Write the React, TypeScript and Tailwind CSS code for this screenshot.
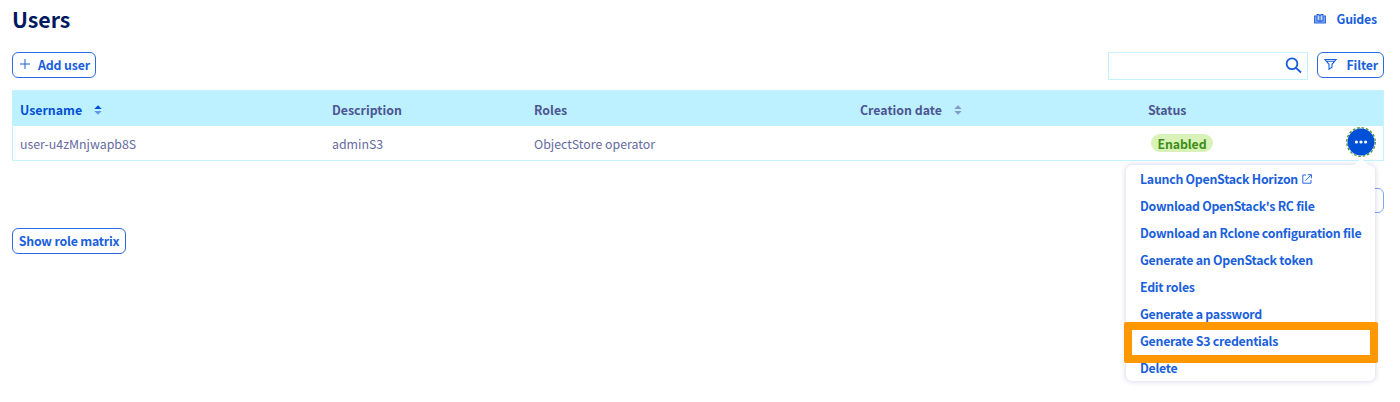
import React from "react";

const columns = [
  { label: "Username", width: "w-[312px]", sort: "active" },
  { label: "Description", width: "w-[202px]", sort: "" },
  { label: "Roles", width: "w-[326px]", sort: "" },
  { label: "Creation date", width: "w-[288px]", sort: "idle" },
  { label: "Status", width: "w-[120px]", sort: "" },
];

const actions = [
  "Launch OpenStack Horizon",
  "Download OpenStack's RC file",
  "Download an Rclone configuration file",
  "Generate an OpenStack token",
  "Edit roles",
  "Generate a password",
  "Generate S3 credentials",
  "Delete",
];

function SortIcon({ active }: { active: boolean }) {
  return (
    <svg width="8" height="10" viewBox="0 0 8 10" className="ml-3">
      <path d="M.3 4 4 .2 7.7 4Z" fill={active ? "#0050d7" : "#7f9bc6"} />
      <path d="M.3 6 4 9.8 7.7 6Z" fill={active ? "#5d99e4" : "#7f9bc6"} />
    </svg>
  );
}

function BookIcon() {
  return (
    <svg width="12" height="10" viewBox="0 0 12 10" fill="none" stroke="#2a66de" strokeWidth="1.1">
      <path d="M2.5 2H.6V9H11.4V2H9.5" fill="#8fb2f0" />
      <path d="M6 1.6Q5.4.6 4.2.6H3V6.9H4.2Q5.4 6.9 6 7.8Q6.6 6.9 7.8 6.9H9V.6H7.8Q6.6.6 6 1.6V7.6" fill="#c3d6f8" />
    </svg>
  );
}

export default function App() {
  return (
    <div className="h-[402px] w-[1400px] overflow-hidden bg-white pl-3 pr-4 font-['Noto_Sans_CJK_SC','Source_Sans_Pro',sans-serif] text-[12.35px] leading-[18px] text-[#1a5fdc]">
      <header className="flex h-[52px] items-start justify-between">
        <h1 className="mt-1 text-[21.3px] font-bold leading-[30px] text-[#00185e]">Users</h1>
        <a className="mr-[7px] mt-[10px] flex items-center gap-[11px] font-bold tracking-[-0.2px]">
          <BookIcon />
          Guides
        </a>
      </header>

      <div className="flex h-[38px] items-start justify-between">
        <button className="flex h-[26px] w-[84px] items-center justify-between rounded-md border border-[#2b6be0] pl-[6px] pr-[5px] font-bold tracking-[-0.15px]">
          <svg width="12" height="12" viewBox="0 0 12 12" className="mb-[3px]" fill="none" stroke="#1a5fdc">
            <path d="M6 1v10M1 6h10" />
          </svg>
          Add user
        </button>
        <div className="flex items-start gap-[9px]">
          <div className="flex h-7 w-[200px] items-center justify-end border border-[#c4f2ff] pr-[5px]">
            <svg width="17" height="17" viewBox="0 0 17 17" className="mb-[2px]" fill="none" stroke="#1459db" strokeWidth="1.8">
              <circle cx="7" cy="6.8" r="5.4" />
              <path d="m11 10.8 5 4.7" />
            </svg>
          </div>
          <button className="flex h-[26px] w-[67px] items-center justify-between rounded-md border border-[#2b6be0] pl-[6px] pr-[5px] font-bold tracking-[-0.15px]">
            <svg width="13" height="13" viewBox="0 0 13 13" className="mb-[2px]" fill="none" stroke="#1a5fdc" strokeWidth="1.1">
              <path d="M1 1.5H12L8 6.3V9.3L5 11.2V6.3Z M2.5 3.3H10.5" />
            </svg>
            Filter
          </button>
        </div>
      </div>

      <div className="h-[71px] border border-[#c4f2ff]">
        <div className="flex h-[35px] items-center bg-[#bef1ff] pl-[7px] pt-[2px] font-bold text-[#4d5592]">
          {columns.map((c) => (
            <div key={c.label} className={"flex items-center " + c.width}>
              <span className={c.sort === "active" ? "text-[#0050d7]" : ""}>{c.label}</span>
              {c.sort && <SortIcon active={c.sort === "active"} />}
            </div>
          ))}
        </div>
        <div className="flex h-[34px] items-center pl-[7px] text-[#666b9f]">
          <span className="w-[312px] pt-px">user-u4zMnjwapb8S</span>
          <span className="w-[202px] pt-px">adminS3</span>
          <span className="w-[614px] pt-px">ObjectStore operator</span>
          <span className="ml-[3px] flex h-[18px] w-[62px] items-center justify-center rounded-full bg-[#d9f2b8] pt-px font-bold tracking-[-0.1px] text-[#3c8f16]">
            Enabled
          </span>
          <div className="relative -mt-[2px] ml-[133px]">
            <svg width="30" height="30" viewBox="0 0 30 30" className="block">
              <circle cx="15" cy="15" r="14.3" fill="#fff" stroke="#4b9531" strokeWidth="1.3" strokeDasharray="2.6 1.9" />
              <circle cx="15" cy="15" r="13.5" fill="#0050d7" />
              <circle cx="10.4" cy="15" r="1.6" fill="#fff" />
              <circle cx="15" cy="15" r="1.6" fill="#fff" />
              <circle cx="19.6" cy="15" r="1.6" fill="#fff" />
            </svg>
            <div className="absolute right-px top-[38px] z-10 h-[216px] w-[249px] rounded-md bg-white pl-[14px] font-bold tracking-[-0.26px] text-[#1a5fdc] shadow-[0_0_5px_1px_rgba(0,14,156,0.15)]">
              <svg width="18" height="9" viewBox="0 0 18 9" className="absolute -top-[7px] right-[5px]">
                <path d="M0 9 9 0 18 9Z" fill="#fff" />
              </svg>
              {actions.map((a, i) => (
                <div key={a} className="flex h-[27px] items-center whitespace-nowrap pt-px">
                  <span>{a}</span>
                  {i === 0 && (
                    <svg width="10" height="10" viewBox="0 0 10 10" className="mb-px ml-1" fill="none" stroke="#2a66de">
                      <path d="M4 1H.8V9.2H9V6M5.8.7H9.4V4.3M9.2.9 3.5 6.6" />
                    </svg>
                  )}
                </div>
              ))}
              <div className="absolute -left-[2px] top-[157px] h-[41px] w-[254px] rounded-[2px] border-8 border-[#ff9800]" />
            </div>
          </div>
        </div>
      </div>

      <div className="flex h-[67px] justify-end pt-[27px]">
        <div className="h-[25px] w-[67px] rounded-md border border-[#7fa8ec]" />
      </div>
      <button className="h-[26px] w-[114px] whitespace-nowrap rounded-md border border-[#2b6be0] text-center font-bold tracking-[-0.2px]">
        Show role matrix
      </button>
    </div>
  );
}
